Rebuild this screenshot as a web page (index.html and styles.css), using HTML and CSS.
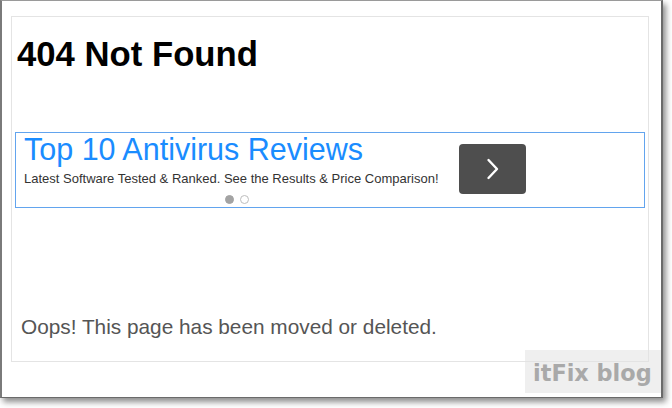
FILE: index.html
```html
<!DOCTYPE html>
<html lang="en">
<head>
<meta charset="utf-8">
<title>404 Not Found</title>
<link rel="stylesheet" href="styles.css">
</head>
<body>
<div class="frame">
  <div class="page">
    <h1 class="title">404 Not Found</h1>
    <div class="ad">
      <div class="ad-text">
        <div class="ad-head">Top 10 Antivirus Reviews</div>
        <div class="ad-sub">Latest Software Tested &amp; Ranked. See the Results &amp; Price Comparison!</div>
        <div class="dots"><span class="dot dot-on"></span><span class="dot"></span></div>
      </div>
      <div class="ad-btn">
        <svg width="14" height="22" viewBox="0 0 14 22"><path d="M2.5 2 L11 11 L2.5 20" fill="none" stroke="#fff" stroke-width="2.4" stroke-linecap="round" stroke-linejoin="round"/></svg>
      </div>
    </div>
    <p class="msg">Oops! This page has been moved or deleted.</p>
  </div>
  <div class="watermark">itFix blog</div>
</div>
</body>
</html>
```

FILE: styles.css
```css
html, body {
  margin: 0;
  padding: 0;
  background: #fff;
}
body {
  width: 672px;
  height: 408px;
  overflow: hidden;
  font-family: "Liberation Sans", Arial, sans-serif;
}
.frame {
  position: relative;
  width: 659px;
  height: 396px;
  border-left: 2px solid #7a7a7a;
  border-top: 1px solid #9a9a9a;
  border-right: 2px solid #6a6a6a;
  border-bottom: 1px solid #6a6a6a;
  box-shadow: 3px 4px 6px rgba(0, 0, 0, 0.45);
  background: #fff;
}
.page {
  margin: 15px 0 0 9px;
  width: 630px;
  border: 1px solid #e4e4e4;
  padding: 0 3px 22px 3px;
}
.title {
  margin: 17px 0 0 2px;
  font-size: 34.7px;
  line-height: 40px;
  font-weight: bold;
  color: #000;
}
.ad {
  margin-top: 58px;
  border: 1px solid #62a4ee;
  display: flex;
  align-items: flex-start;
  padding: 0 0 3px 8px;
}
.ad-text {
  width: 426px;
  display: flex;
  flex-direction: column;
}
.ad-head {
  font-size: 30.5px;
  line-height: 32px;
  color: #1a8cff;
  white-space: nowrap;
}
.ad-sub {
  margin-top: 6px;
  font-size: 13px;
  line-height: 15px;
  color: #333;
  white-space: nowrap;
}
.dots {
  margin-top: 9px;
  display: flex;
  justify-content: center;
  gap: 6px;
}
.dot {
  width: 9px;
  height: 9px;
  box-sizing: border-box;
  border-radius: 50%;
  border: 1px solid #bdbdbd;
  background: #fff;
}
.dot-on {
  background: #a3a3a3;
  border-color: #a3a3a3;
}
.ad-btn {
  margin: 11px 0 0 9px;
  width: 67px;
  height: 50px;
  background: #4e4e4e;
  border-radius: 4px;
  display: flex;
  align-items: center;
  justify-content: center;
}
.msg {
  margin: 107px 0 0 6px;
  font-size: 20.8px;
  line-height: 24px;
  color: #555;
}
.watermark {
  position: absolute;
  left: 523px;
  top: 349px;
  width: 128px;
  height: 33px;
  padding: 10px 0 0 8px;
  background: rgba(225, 225, 225, 0.55);
  font-family: "DejaVu Sans", sans-serif;
  font-weight: bold;
  font-size: 22.4px;
  line-height: 26px;
  color: #a9a9a9;
  white-space: nowrap;
}
```
